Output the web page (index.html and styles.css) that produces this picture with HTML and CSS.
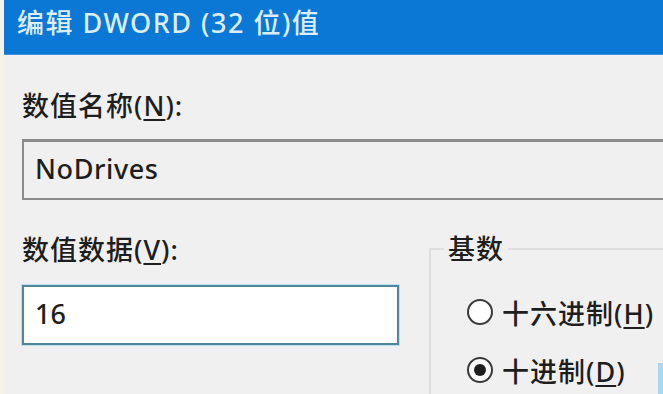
FILE: index.html
```html
<!DOCTYPE html>
<html lang="zh-CN">
<head>
<meta charset="utf-8">
<title>编辑 DWORD (32 位)值</title>
<link rel="stylesheet" href="styles.css">
</head>
<body>
<div class="window">
  <div class="titlebar">编辑 DWORD (32 位)值</div>
  <div class="content">
    <div class="label label-name">数值名称(<u>N</u>):</div>
    <div class="textbox readonly">NoDrives</div>
    <div class="row">
      <div class="col-left">
        <div class="label">数值数据(<u>V</u>):</div>
        <div class="textbox focused">16</div>
      </div>
      <fieldset class="group">
        <legend>基数</legend>
        <div class="radios">
          <div class="radio"><span class="dot"></span><span>十六进制(<u>H</u>)</span></div>
          <div class="radio"><span class="dot checked"></span><span>十进制(<u>D</u>)</span></div>
        </div>
      </fieldset>
    </div>
  </div>
  <div class="btn-edge"></div>
</div>
</body>
</html>
```

FILE: styles.css
```css
html, body {
  margin: 0;
  padding: 0;
}
body {
  width: 663px;
  height: 394px;
  overflow: hidden;
  background: #f0f0f0;
  font-family: "Noto Sans", "Noto Sans CJK SC", sans-serif;
  font-weight: 500;
  color: #1e1e1e;
}
.window {
  position: relative;
  height: 394px;
  overflow: hidden;
  border-left: 4px solid #f5f2e8;
  box-sizing: border-box;
}
.titlebar {
  height: 55px;
  box-sizing: border-box;
  background: #0b78d6;
  color: #dcedfb;
  font-size: 27px;
  line-height: 45px;
  letter-spacing: 1.5px;
  padding-left: 13px;
  border-bottom: 1px solid #3d93dc;
  white-space: nowrap;
}
.content {
  padding-left: 18px;
}
.label {
  font-size: 27px;
  line-height: 30px;
  letter-spacing: 1px;
  white-space: nowrap;
}
.label-name {
  margin-top: 36px;
}
.textbox {
  box-sizing: border-box;
  font-size: 27px;
  white-space: nowrap;
}
.textbox.readonly {
  margin-top: 18px;
  height: 61px;
  line-height: 54px;
  padding-left: 11px;
  border: 2px solid #8c8c8c;
  border-top: 3px solid #8a8a8a;
  border-right: none;
  background: #f0f0f0;
  letter-spacing: 0.6px;
}
.row {
  display: flex;
  margin-top: 35px;
}
.col-left {
  width: 377px;
  flex: none;
}
.textbox.focused {
  margin-top: 20px;
  width: 377px;
  height: 60px;
  line-height: 54px;
  padding-left: 11px;
  border: 2px solid #4f8698;
  background: #fff;
  box-shadow: 0 0 0 1px #b8e2f2;
}
.group {
  margin: 0 0 0 30px;
  padding: 0;
  min-width: 0;
  flex: 1;
  border: 2px solid #dedede;
  border-right: none;
  border-bottom: none;
}
.group legend {
  font-size: 27px;
  line-height: 28px;
  padding: 0 4px;
  margin-left: 13px;
  letter-spacing: 1px;
}
.radios {
  padding: 20px 0 0 36px;
}
.radio {
  display: flex;
  align-items: center;
  gap: 9px;
  height: 58px;
  font-size: 27px;
  letter-spacing: 1px;
  white-space: nowrap;
}
.dot {
  width: 22px;
  height: 22px;
  border: 2px solid #3a3a3a;
  border-radius: 50%;
  background: #fff;
  box-sizing: content-box;
  display: flex;
  align-items: center;
  justify-content: center;
  flex: none;
}
.dot.checked::after {
  content: "";
  width: 12px;
  height: 12px;
  border-radius: 50%;
  background: #1e1e1e;
}
u {
  text-underline-offset: 3px;
}
.btn-edge {
  position: absolute;
  right: 0;
  top: 363px;
  width: 5px;
  height: 31px;
  background: #a9d9f2;
}
```
